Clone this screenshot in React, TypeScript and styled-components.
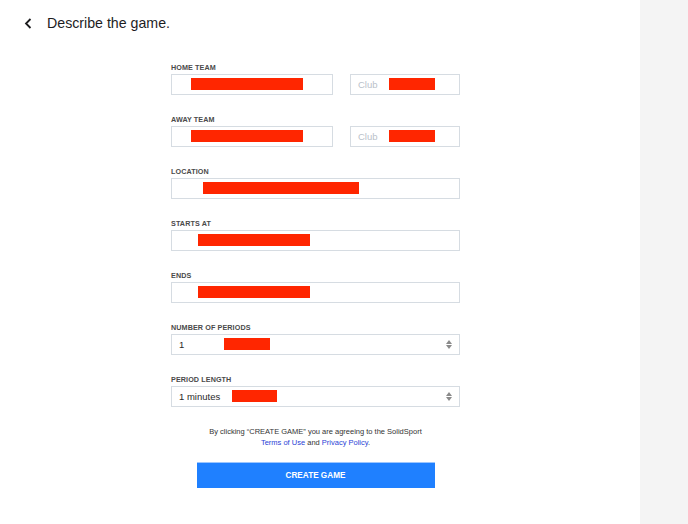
import { createGlobalStyle } from 'styled-components'
import styled from 'styled-components'

const GlobalStyle = createGlobalStyle`
  html, body {
    margin: 0;
    padding: 0;
    background: #ffffff;
  }

  body {
    font-family: 'Liberation Sans', Arial, sans-serif;
    color: #222;
  }
`

const Page = styled.div`
  display: grid;
  grid-template-columns: 640px 1fr;
  min-height: 524px;
`

const Main = styled.main`
  background: #ffffff;
  padding: 12px 0 0;
`

const Aside = styled.aside`
  background: #f4f4f4;
`

const Header = styled.header`
  align-items: center;
  column-gap: 15px;
  display: flex;
  height: 22px;
  padding-left: 24px;
`

const BackButton = styled.button`
  background: none;
  border: 0;
  cursor: pointer;
  display: flex;
  padding: 0;

  svg {
    display: block;
  }
`

const Title = styled.h1`
  color: #1d1d1f;
  font-size: 14.2px;
  font-weight: 400;
  margin: 0;
`

const Form = styled.form`
  display: flex;
  flex-direction: column;
  margin: 29px 0 0 171px;
  width: 289px;
`

const Group = styled.div`
  display: flex;
  flex-direction: column;
  margin-bottom: 20px;
`

const Label = styled.label`
  color: #4a4a4a;
  font-size: 7.2px;
  font-weight: 700;
  height: 10px;
  letter-spacing: 0.1px;
  line-height: 10px;
  margin-bottom: 1px;
`

const Row = styled.div`
  display: grid;
  column-gap: 17px;
  grid-template-columns: 162px 1fr;
`

const Field = styled.div`
  align-items: center;
  border: 1px solid #d6dce2;
  box-sizing: border-box;
  color: #222;
  display: flex;
  font-size: 9.5px;
  height: 21px;
  padding: 0 7px;
  position: relative;
`

const Placeholder = styled.span`
  color: #b9c1ca;
`

const Value = styled.span`
  color: #2a2a2a;
`

const Redaction = styled.span<{ left: number; width: number }>`
  background: #ff2600;
  height: 12px;
  left: ${({ left }) => left}px;
  position: absolute;
  top: 3px;
  width: ${({ width }) => width}px;
`

const Stepper = styled.span`
  display: flex;
  flex-direction: column;
  margin-left: auto;
  row-gap: 1px;

  svg {
    display: block;
  }
`

const Terms = styled.p`
  color: #333;
  font-size: 7.5px;
  line-height: 11px;
  margin: -1px 0 0;
  text-align: center;
`

const Link = styled.a`
  color: #2a3fd6;
  text-decoration: none;
`

const Submit = styled.button`
  align-self: center;
  background: #1f80ff;
  border: 0;
  border-top: 1px solid #9cc6ff;
  color: #ffffff;
  cursor: pointer;
  font-family: inherit;
  font-size: 8.2px;
  font-weight: 700;
  height: 26px;
  margin-top: 14px;
  padding: 0;
  width: 238px;
`

const ChevronLeft = () => (
  <svg width="8" height="11" viewBox="0 0 8 11">
    <path d="M6.5 1 L2 5.5 L6.5 10" fill="none" stroke="#1d1d1f" strokeWidth="1.8" />
  </svg>
)

const Arrows = () => (
  <Stepper>
    <svg width="6" height="4" viewBox="0 0 6 4">
      <path d="M0 4 L3 0 L6 4 Z" fill="#8a8a8a" />
    </svg>
    <svg width="6" height="4" viewBox="0 0 6 4">
      <path d="M0 0 L3 4 L6 0 Z" fill="#8a8a8a" />
    </svg>
  </Stepper>
)

const TeamGroup = ({ label }: { label: string }) => (
  <Group>
    <Label>{label}</Label>
    <Row>
      <Field>
        <Redaction left={19} width={112} />
      </Field>
      <Field>
        <Placeholder>Club</Placeholder>
        <Redaction left={38} width={46} />
      </Field>
    </Row>
  </Group>
)

const TextGroup = ({ label, left, width }: { label: string; left: number; width: number }) => (
  <Group>
    <Label>{label}</Label>
    <Field>
      <Redaction left={left} width={width} />
    </Field>
  </Group>
)

const SelectGroup = ({
  label,
  value,
  left,
  width,
}: {
  label: string
  value: string
  left: number
  width: number
}) => (
  <Group>
    <Label>{label}</Label>
    <Field>
      <Value>{value}</Value>
      <Redaction left={left} width={width} />
      <Arrows />
    </Field>
  </Group>
)

const App = () => (
  <>
    <GlobalStyle />
    <Page>
      <Main>
        <Header>
          <BackButton type="button">
            <ChevronLeft />
          </BackButton>
          <Title>Describe the game.</Title>
        </Header>
        <Form onSubmit={(e) => e.preventDefault()}>
          <TeamGroup label="HOME TEAM" />
          <TeamGroup label="AWAY TEAM" />
          <TextGroup label="LOCATION" left={31} width={156} />
          <TextGroup label="STARTS AT" left={26} width={112} />
          <TextGroup label="ENDS" left={26} width={112} />
          <SelectGroup label="NUMBER OF PERIODS" value="1" left={52} width={46} />
          <SelectGroup label="PERIOD LENGTH" value="1 minutes" left={60} width={45} />
          <Terms>
            By clicking “CREATE GAME” you are agreeing to the SolidSport
            <br />
            <Link href="#">Terms of Use</Link> and <Link href="#">Privacy Policy</Link>.
          </Terms>
          <Submit type="submit">CREATE GAME</Submit>
        </Form>
      </Main>
      <Aside />
    </Page>
  </>
)

export default App
